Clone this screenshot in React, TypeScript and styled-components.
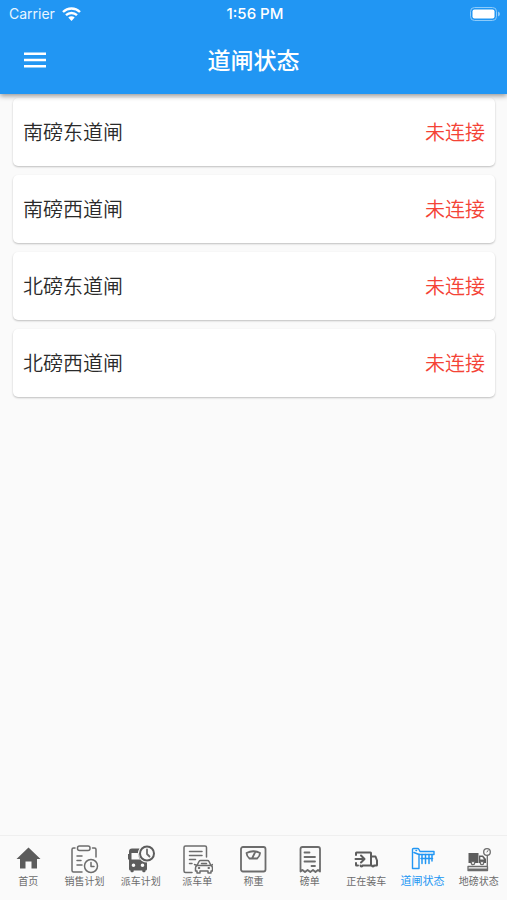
import React from "react";
import styled, { createGlobalStyle } from "styled-components";

const GlobalStyle = createGlobalStyle`
  * { box-sizing: border-box; }
  body {
    margin: 0;
    background: #fafafa;
    font-family: "Inter", "Noto Sans CJK SC", sans-serif;
  }
`;

const Screen = styled.div`
  min-height: 100vh;
  display: flex;
  flex-direction: column;
  background: #fafafa;
`;

const Header = styled.header`
  position: sticky;
  top: 0;
  z-index: 1;
  color: #fff;
  background: #2196f3;
  box-shadow: 0 2px 5px rgba(0, 0, 0, 0.4);
`;

const StatusBar = styled.div`
  height: 27px;
  padding: 0 6px 0 9px;
  display: grid;
  grid-template-columns: 1fr auto 1fr;
  align-items: center;
  font-size: 14px;
  line-height: 20px;
`;

const Carrier = styled.div`
  display: flex;
  align-items: center;
  gap: 7px;
  color: #e8f5ff;
`;

const Clock = styled.time`
  font-size: 15px;
  font-weight: 500;
`;

const Battery = styled.svg`
  justify-self: end;
`;

const TitleBar = styled.div`
  height: 67px;
  padding: 0 15px 2px;
  display: grid;
  grid-template-columns: 40px 1fr 40px;
  align-items: center;
`;

const MenuButton = styled.button`
  width: 40px;
  height: 40px;
  padding: 0;
  border: 0;
  display: grid;
  place-items: center;
  color: #fff;
  background: none;
  cursor: pointer;
`;

const Title = styled.h1`
  margin: 0;
  padding-bottom: 2px;
  font-family: "Noto Sans CJK SC", sans-serif;
  font-size: 23px;
  font-weight: 500;
  line-height: 32px;
  text-align: center;
`;

const GateList = styled.ul`
  flex: 1;
  margin: 0;
  padding: 4px 12px 12px 13px;
  display: flex;
  flex-direction: column;
  gap: 9px;
  list-style: none;
`;

const GateCard = styled.li`
  height: 68px;
  padding: 0 10px;
  display: flex;
  align-items: center;
  justify-content: space-between;
  border-radius: 5px;
  background: #fff;
  box-shadow: 0 1px 2px rgba(0, 0, 0, 0.24);
  font-family: "Noto Sans CJK SC", sans-serif;
  font-size: 20px;
  font-weight: 350;
  line-height: 28px;
  color: #2a2a2a;
`;

const GateStatus = styled.span`
  color: #f44336;
`;

const TabBar = styled.nav`
  position: sticky;
  bottom: 0;
  height: 65px;
  padding-top: 8px;
  display: grid;
  grid-template-columns: repeat(9, minmax(0, 1fr));
  border-top: 1px solid #efefef;
  background: #fafafa;
`;

const Tab = styled.a<{ $active: boolean }>`
  display: flex;
  flex-direction: column;
  align-items: center;
  font-family: "Noto Sans CJK SC", sans-serif;
  font-size: ${(p) => (p.$active ? 11 : 10)}px;
  line-height: ${(p) => (p.$active ? 12 : 14)}px;
  white-space: nowrap;
  text-decoration: none;
  color: ${(p) => (p.$active ? "#2196f3" : "#6c6c6c")};
`;

const TabIcon = styled.svg`
  width: 32px;
  height: 30px;
  fill: none;
  stroke: currentColor;
  stroke-width: 1.5;
  stroke-linecap: round;
  stroke-linejoin: round;
`;

const gates = [
  { name: "南磅东道闸", status: "未连接" },
  { name: "南磅西道闸", status: "未连接" },
  { name: "北磅东道闸", status: "未连接" },
  { name: "北磅西道闸", status: "未连接" },
];

const tabs: { id: string; label: string; icon: React.ReactNode }[] = [
  {
    id: "home",
    label: "首页",
    icon: (
      <path
        d="M14.5 2.5 26.5 14H23v9.5h-5.500V16.500h-6v7H6V14H2.500z"
        fill="#5c5c5c"
        stroke="none"
      />
    ),
  },
  {
    id: "sales-plan",
    label: "销售计划",
    icon: (
      <>
        <path d="M5 3H3.500A1.500 1.500 0 0 0 2 4.500v21A1.500 1.500 0 0 0 3.500 27H12M22.500 3H24.500A1.500 1.500 0 0 1 26 4.500V12" />
        <rect x="7.500" y="1" width="12.500" height="4.500" rx="2" />
        <path d="M7 11h5M7 15.500h4M7 20h5" />
        <circle cx="21" cy="21" r="6.500" />
        <path d="M21 17.500V21.500h3" />
      </>
    ),
  },
  {
    id: "dispatch-plan",
    label: "派车计划",
    icon: (
      <>
        <path
          fillRule="evenodd"
          stroke="none"
          fill="#5c5c5c"
          d="M5 3.500H12.500a9 9 0 0 0 7.500 14V24a1.500 1.500 0 0 1-1.500 1.500V26a1.200 1.200 0 0 1-1.200 1.200H16.500A1.200 1.200 0 0 1 15.300 26v-.5H6.700v.5a1.200 1.200 0 0 1-1.200 1.200H4.700A1.200 1.200 0 0 1 3.500 26v-.5A1.500 1.500 0 0 1 2 24v-9.500H1V9h1V6.500A3 3 0 0 1 5 3.500zM4.500 8V14.500h9a10 10 0 0 1-2.500-6.500zM6.500 18.500a1.800 1.800 0 1 0 0 3.600 1.800 1.800 0 0 0 0-3.600zM15.500 18.500a1.800 1.800 0 1 0 0 3.600 1.800 1.800 0 0 0 0-3.600z"
        />
        <circle cx="20" cy="8.500" r="7" strokeWidth="2" stroke="#5c5c5c" />
        <path d="M20 4.500v4.500l2.500 2.500" strokeWidth="1.800" />
      </>
    ),
  },
  {
    id: "dispatch-order",
    label: "派车单",
    icon: (
      <>
        <path d="M9 27.500H2.500A1.500 1.500 0 0 1 1 26V2.500A1.500 1.500 0 0 1 2.500 1H22a1.500 1.500 0 0 1 1.500 1.500V12M6.500 6.500H19M6.500 10.500H19M6.500 14.500h6M6.500 18.500h2.500" />
        <path d="M14 20.500l2-4q.5-.9 1.500-.9h7q1 0 1.500.9l2 4q1.500.7 1.500 2.500v3h-1.500v2h-3V26h-8v2h-3v-2H12.500v-3q0-1.800 1.500-2.500zM11.500 19.500l2.500 1h14l2-1M18.500 18.500h5" />
        <path d="M15.800 23h.5M25.500 23h.5" strokeWidth="2" />
      </>
    ),
  },
  {
    id: "weigh",
    label: "称重",
    icon: (
      <>
        <rect x="2" y="2" width="24.500" height="24.500" rx="2" strokeWidth="1.800" />
        <path d="M7.500 8q6.800-3.500 13.600 0-.3 3.500-3 5.500h-7.600q-2.700-2-3-5.500zM13.500 12.500l2.500-5" strokeWidth="1.800" />
      </>
    ),
  },
  {
    id: "weigh-ticket",
    label: "磅单",
    icon: (
      <path
        d="M4.500 26.500V4q0-2 2-2H22q2 0 2 2v22.500l-2-1.500-2.500 2-2.500-2-2.700 2-2.700-2L9 27 6.500 25zM8.500 7.500h5M8.500 12H19M8.500 16.500H19M15.500 21H19"
        strokeWidth="1.800"
      />
    ),
  },
  {
    id: "loading",
    label: "正在装车",
    icon: (
      <path
        d="M4 10V8q0-.5.500-.5H18.500q.5 0 .5.500V20.500M4 18v2q0 .5.500.500H6M8.500 20.500q0 1 1 1t1-1H20q0 1 1 1t1-1H24.500q.5 0 .5-.5V15.500L23.500 11.500H19M3.500 14H12M9 10.500l3.500 3.500L9 17.500"
        stroke="#5c5c5c"
        strokeWidth="2"
      />
    ),
  },
  {
    id: "gates",
    label: "道闸状态",
    icon: (
      <>
        <path d="M4.500 9V23.500h6.500V9M4.500 9V4.500q0-1 1-1h4q1 0 1.500 1L12 6.500H26V9.500H11L6 7.500" strokeWidth="1.400" />
        <path d="M8 5.500h.5" strokeWidth="1.500" />
        <path d="M14 9.500v9M17.500 9.500v9M21 9.500v9M24 9.500v6.500M13 13.500H24.500" strokeWidth="1.500" />
      </>
    ),
  },
  {
    id: "scales",
    label: "地磅状态",
    icon: (
      <>
        <path
          fillRule="evenodd"
          stroke="none"
          fill="#5c5c5c"
          d="M3.500 8H13.500v10H3.500zM14 10.500h4l3 3.500v4H14zM15.300 12v2.500H19L17.300 12z"
        />
        <path d="M3 21.500H22.500V25.500H3zM22.300 10.500v11" strokeWidth="1.300" />
        <path d="M4 24.500H22" strokeWidth="2" />
        <circle cx="22" cy="7" r="3.300" strokeWidth="1.300" />
        <path d="M22 7l1-1.500" strokeWidth="1" />
        <circle cx="8" cy="18" r="1.700" fill="#fafafa" strokeWidth="1.300" />
        <circle cx="17" cy="18" r="1.700" fill="#fafafa" strokeWidth="1.300" />
      </>
    ),
  },
];

export default function App() {
  return (
    <Screen>
      <GlobalStyle />
      <Header>
        <StatusBar>
          <Carrier>
            Carrier
            <svg width="19" height="14" viewBox="0 0 19 14" fill="none" stroke="#fff" strokeWidth="2.400">
              <path d="M1 5a12.200 12.200 0 0 1 17 0M4 8.200a8 8 0 0 1 11 0" />
              <path d="M6.300 10.500a4.600 4.600 0 0 1 6.400 0L9.500 14z" fill="#fff" stroke="none" />
            </svg>
          </Carrier>
          <Clock>1:56 PM</Clock>
          <Battery width="31" height="14" viewBox="0 0 31 14">
            <rect x="0.500" y="0.500" width="26" height="13" rx="4" fill="none" stroke="#8dcbfa" />
            <rect x="2.500" y="2.500" width="22" height="9" rx="2" fill="#fff" />
            <path d="M28 4.500q2 .7 2 2.500t-2 2.500z" fill="#8dcbfa" />
          </Battery>
        </StatusBar>
        <TitleBar>
          <MenuButton type="button" aria-label="菜单">
            <svg width="22" height="16" viewBox="0 0 22 16" fill="currentColor">
              <path d="M0 0.500h22v2.600H0zM0 6.700h22v2.600H0zM0 12.900h22v2.600H0z" />
            </svg>
          </MenuButton>
          <Title>道闸状态</Title>
        </TitleBar>
      </Header>
      <GateList>
        {gates.map((gate) => (
          <GateCard key={gate.name}>
            <span>{gate.name}</span>
            <GateStatus>{gate.status}</GateStatus>
          </GateCard>
        ))}
      </GateList>
      <TabBar>
        {tabs.map((tab) => {
          const active = tab.id === "gates";
          return (
            <Tab key={tab.id} href={`#${tab.id}`} $active={active} aria-current={active ? "page" : undefined}>
              <TabIcon viewBox="-2 -1 32 30" aria-hidden="true">
                {tab.icon}
              </TabIcon>
              {tab.label}
            </Tab>
          );
        })}
      </TabBar>
    </Screen>
  );
}
